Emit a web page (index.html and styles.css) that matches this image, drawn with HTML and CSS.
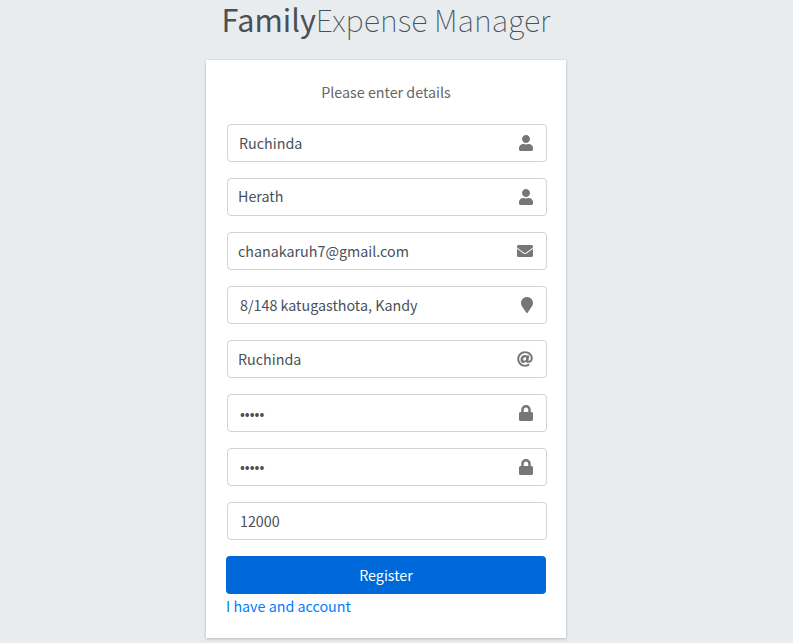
FILE: index.html
```html
<!DOCTYPE html>
<html lang="en">
<head>
<meta charset="utf-8">
<title>Family Expense Manager</title>
<link rel="stylesheet" href="styles.css">
</head>
<body>
<svg class="sprite" aria-hidden="true">
<symbol id="user" viewBox="0 0 448 512"><path d="M224 256c70.7 0 128-57.3 128-128S294.7 0 224 0 96 57.3 96 128s57.3 128 128 128zm89.6 32h-16.7c-22.2 10.2-46.9 16-72.9 16s-50.6-5.800-72.9-16h-16.7C60.2 288 0 348.2 0 422.4V464c0 26.500 21.500 48 48 48h352c26.500 0 48-21.500 48-48v-41.600c0-74.200-60.200-134.400-134.400-134.400z"/></symbol>
<symbol id="mail" viewBox="0 0 512 512"><path d="M502.300 190.800c3.900-3.100 9.700-.2 9.700 4.700V400c0 26.500-21.500 48-48 48H48c-26.500 0-48-21.500-48-48V195.600c0-5 5.700-7.800 9.700-4.700 22.400 17.400 52.100 39.500 154.100 113.600 21.100 15.400 56.700 47.800 92.200 47.600 35.700.3 72-32.800 92.300-47.600 102-74.100 131.600-96.300 154-113.700zM256 320c23.200.4 56.600-29.200 73.400-41.400 132.700-96.300 142.800-104.700 173.400-128.700 5.800-4.500 9.200-11.500 9.200-18.900v-19c0-26.500-21.500-48-48-48H48c-26.500 0-48 21.500-48 48v19c0 7.400 3.400 14.300 9.200 18.900 30.600 23.900 40.700 32.400 173.400 128.700 16.800 12.200 50.200 41.800 73.400 41.400z"/></symbol>
<symbol id="marker" viewBox="0 0 384 512"><path d="M172.268 501.670C26.970 291.031 0 269.413 0 192 0 85.961 85.961 0 192 0s192 85.961 192 192c0 77.413-26.970 99.031-172.268 309.670-9.535 13.774-29.930 13.773-39.464 0z"/></symbol>
<symbol id="at" viewBox="0 0 512 512"><path d="M256 8C118.941 8 8 118.919 8 256c0 137.058 110.919 248 248 248 48.154 0 95.342-14.140 135.408-40.223 12.005-7.815 14.625-24.288 5.552-35.372l-10.177-12.433c-7.671-9.371-21.179-11.667-31.373-5.129C325.920 429.757 291.314 440 256 440c-101.458 0-184-82.542-184-184S154.542 72 256 72c100.139 0 184 57.619 184 160 0 38.786-21.093 79.742-58.170 83.693-17.349-.454-16.910-12.857-13.476-30.024l23.433-121.110C394.653 149.750 383.308 136 368.225 136h-44.981a13.518 13.518 0 0 0-13.432 11.993l-.01.092c-14.697-17.901-40.448-21.775-59.971-21.775-74.580 0-137.831 62.234-137.831 151.460 0 65.303 36.785 105.870 96 105.870 26.984 0 57.369-15.637 74.991-38.333 9.522 34.104 40.613 34.104 70.710 34.104C462.609 379.410 504 307.798 504 232 504 95.653 394.023 8 256 8zm-21.680 304.430c-22.249 0-36.070-15.623-36.070-40.771 0-44.993 30.779-72.729 58.630-72.729 22.292 0 35.601 15.241 35.601 40.770 0 45.061-33.875 72.730-58.161 72.730z"/></symbol>
<symbol id="lock" viewBox="0 0 448 512"><path d="M400 224h-24v-72C376 68.200 307.800 0 224 0S72 68.200 72 152v72H48c-26.500 0-48 21.500-48 48v192c0 26.500 21.500 48 48 48h352c26.500 0 48-21.500 48-48V272c0-26.500-21.500-48-48-48zm-104 0H152v-72c0-39.700 32.300-72 72-72s72 32.300 72 72v72z"/></symbol>
</svg>
<main class="register">
<h1 class="logo"><b>Family</b>Expense Manager</h1>
<section class="card">
<p class="intro">Please enter details</p>
<form class="form">
<div class="field first"><span class="value">Ruchinda</span><svg class="icon narrow"><use href="#user"/></svg></div>
<div class="field last"><span class="value">Herath</span><svg class="icon narrow"><use href="#user"/></svg></div>
<div class="field email"><span class="value">chanakaruh7@gmail.com</span><svg class="icon"><use href="#mail"/></svg></div>
<div class="field address"><span class="value">8/148 katugasthota, Kandy</span><svg class="icon pin"><use href="#marker"/></svg></div>
<div class="field username"><span class="value">Ruchinda</span><svg class="icon"><use href="#at"/></svg></div>
<div class="field password"><span class="value">•••••</span><svg class="icon narrow"><use href="#lock"/></svg></div>
<div class="field password confirm"><span class="value">•••••</span><svg class="icon narrow"><use href="#lock"/></svg></div>
<div class="field income"><span class="value">12000</span></div>
<button class="submit" type="button">Register</button>
</form>
<a class="login" href="#">I have and account</a>
</section>
</main>
</body>
</html>
```
FILE: styles.css
```css
* { box-sizing: border-box; }
body {
  margin: 0;
  height: 643px;
  overflow: hidden;
  background: #e9ecef;
  color: #495057;
  font: 400 14.3px/24px "Noto Sans CJK JP", sans-serif;
}
.sprite { position: absolute; width: 0; height: 0; }
.register { width: 360px; margin-left: 206px; }
.logo {
  margin: 0;
  height: 60px;
  font-size: 30.6px;
  line-height: 38px;
  font-weight: 100;
  text-align: center;
  white-space: nowrap;
}
.logo b { font-weight: 400; }
.card {
  height: 578px;
  padding: 20px;
  background: #fff;
  box-shadow: 0 0 1px rgba(0,0,0,.125), 0 1px 3px rgba(0,0,0,.2);
}
.intro { margin: 0 0 20px; text-align: center; color: #666; }
.form { display: flex; flex-direction: column; gap: 16px; }
.field {
  display: flex;
  align-items: center;
  justify-content: space-between;
  width: 320px;
  height: 38px;
  margin-left: 1px;
  padding: 0 12.6px 0 11px;
  border: 1px solid #ced4da;
  border-radius: 4px;
}
.last, .email, .username { padding-left: 10px; }
.address, .password, .income { padding-left: 12px; }
.last .value { margin-bottom: 3px; }
.confirm .value { margin-bottom: 2px; }
.icon { width: 16px; height: 16px; fill: #777; }
.narrow { width: 14px; }
.pin { width: 12px; }
.submit {
  height: 38px;
  padding: 0;
  border: 0;
  border-radius: 4px;
  background: #0069d9;
  color: #fff;
  font: inherit;
}
.login { display: block; color: #007bff; text-decoration: none; }
```
